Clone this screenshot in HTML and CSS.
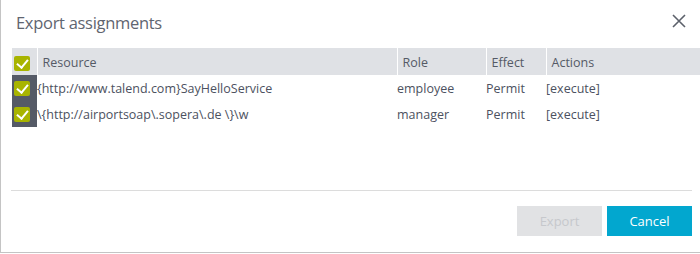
FILE: index.html
```html
<!DOCTYPE html>
<html lang="en">
<head>
    <meta charset="UTF-8">
    <meta name="viewport" content="width=device-width, initial-scale=1.0">
    <title>Export assignments</title>
    <link rel="stylesheet" href="styles.css">
</head>
<body>
    <div class="dialog">
        <div class="dialog-header">
            <h2 class="dialog-title">Export assignments</h2>
            <button class="close-btn" aria-label="Close">
                <svg width="14" height="14" viewBox="0 0 14 14">
                    <path d="M1 1 L13 13 M13 1 L1 13" stroke="#5c616b" stroke-width="1.6" fill="none"/>
                </svg>
            </button>
        </div>
        <table class="grid">
            <thead>
                <tr>
                    <th class="check-col"><span class="check"></span></th>
                    <th class="col-resource">Resource</th>
                    <th class="col-role">Role</th>
                    <th class="col-effect">Effect</th>
                    <th class="col-actions">Actions</th>
                </tr>
            </thead>
            <tbody>
                <tr>
                    <td class="check-col"><span class="check"></span></td>
                    <td>{http://www.talend.com}SayHelloService</td>
                    <td>employee</td>
                    <td>Permit</td>
                    <td>[execute]</td>
                </tr>
                <tr>
                    <td class="check-col"><span class="check"></span></td>
                    <td>\{http://airportsoap\.sopera\.de \}\w</td>
                    <td>manager</td>
                    <td>Permit</td>
                    <td>[execute]</td>
                </tr>
            </tbody>
        </table>
        <div class="dialog-footer">
            <button class="btn btn-disabled" disabled>Export</button>
            <button class="btn btn-primary">Cancel</button>
        </div>
    </div>
</body>
</html>
```

FILE: styles.css
```css
* {
    box-sizing: border-box;
    margin: 0;
    padding: 0;
  }

  body {
    font-family: "Open Sans", Arial, sans-serif;
    background-color: #fff;
    width: 700px;
    height: 254px;
    overflow: hidden;
  }

  .dialog {
    height: 253px;
    border-left: 1px solid #c4c4c4;
    border-bottom: 1px solid #c4c4c4;
    background-color: #fff;
  }

  .dialog-header {
    display: flex;
    justify-content: space-between;
    align-items: center;
    height: 48px;
    padding: 0 14px 4px 15px;
  }

  .dialog-title {
    font-size: 16.5px;
    font-weight: normal;
    color: #5f6570;
    letter-spacing: -0.3px;
  }

  .close-btn {
    border: none;
    background: none;
    display: flex;
    margin-top: -3px;
  }

  .grid {
    border-collapse: collapse;
    margin-left: 11px;
    width: 688px;
    font-size: 12.5px;
    color: #4c5160;
    table-layout: fixed;
  }

  .grid th {
    height: 27px;
    background-color: #dfe1e5;
    font-weight: normal;
    text-align: left;
    padding: 1px 0 0 5px;
    border-left: 1px solid #fff;
    color: #555a66;
  }

  .grid td {
    height: 26px;
    padding: 0;
  }

  .check-col {
    width: 25px;
  }

  .grid th.check-col {
    border-left: none;
    padding: 0;
  }

  .grid td.check-col {
    background-color: #555a66;
  }

  .col-resource {
    width: 360px;
  }

  .col-role {
    width: 89px;
  }

  .col-effect {
    width: 60px;
  }

  .check {
    display: block;
    width: 16px;
    height: 15px;
    margin-left: 2px;
    border-radius: 2px;
    background-color: #a8b400;
    position: relative;
  }

  .grid th .check {
    margin-top: 4px;
  }

  .check::after {
    content: "";
    position: absolute;
    left: 5px;
    top: 1px;
    width: 5px;
    height: 9px;
    border-right: 2.5px solid #fff;
    border-bottom: 2.5px solid #fff;
    transform: rotate(40deg);
  }

  .dialog-footer {
    margin: 63px 8px 0 10px;
    border-top: 1px solid #dcdcdc;
    padding-top: 15px;
    display: flex;
    justify-content: flex-end;
    gap: 5px;
  }

  .btn {
    width: 85px;
    height: 30px;
    border: none;
    font-family: "Open Sans", Arial, sans-serif;
    font-size: 13px;
  }

  .btn-disabled {
    background-color: #e1e2e4;
    color: #c6c8cc;
  }

  .btn-primary {
    background-color: #02a7cf;
    color: #fff;
    cursor: pointer;
  }
```
